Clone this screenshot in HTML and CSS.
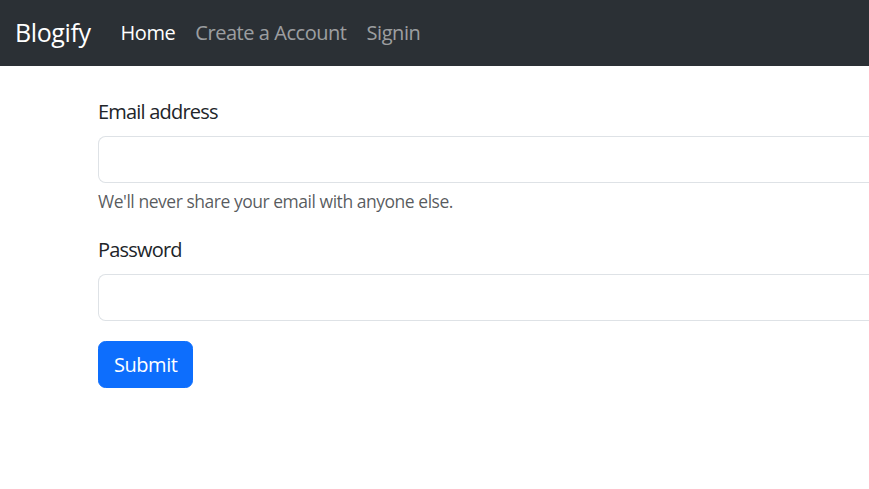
FILE: index.html
```html
<!DOCTYPE html>
<html lang="en">
<head>
<meta charset="utf-8">
<title>Blogify</title>
<link rel="stylesheet" href="styles.css">
</head>
<body>
<nav class="navbar">
  <a class="brand" href="#">Blogify</a>
  <ul class="nav">
    <li><a class="nav-link active" href="#">Home</a></li>
    <li><a class="nav-link" href="#">Create a Account</a></li>
    <li><a class="nav-link" href="#">Signin</a></li>
  </ul>
</nav>
<main class="container">
  <form class="form">
    <div class="group">
      <label class="label" for="email">Email address</label>
      <input class="control" type="email" id="email">
      <div class="help">We'll never share your email with anyone else.</div>
    </div>
    <div class="group">
      <label class="label" for="password">Password</label>
      <input class="control" type="password" id="password">
    </div>
    <button class="btn" type="submit">Submit</button>
  </form>
</main>
</body>
</html>
```
FILE: styles.css
```css
html, body {
  margin: 0;
  padding: 0;
  overflow: hidden;
}
body {
  font-family: "Open Sans", "Noto Sans", sans-serif;
  font-size: 20px;
  line-height: 1.5;
  color: #212529;
  background: #fff;
  letter-spacing: -0.45px;
}
.navbar {
  height: 66px;
  background: #2b3035;
  display: flex;
  align-items: center;
  padding: 0 15px;
  box-sizing: border-box;
}
.brand {
  font-size: 25px;
  line-height: 37.5px;
  color: #fff;
  text-decoration: none;
  margin-right: 20px;
  letter-spacing: -0.4px;
}
.nav {
  display: flex;
  list-style: none;
  margin: 0;
  padding: 0;
}
.nav-link {
  display: block;
  padding: 10px 10px;
  line-height: 30px;
  color: rgba(255, 255, 255, 0.55);
  text-decoration: none;
}
.nav-link.active {
  color: #fff;
}
.container {
  padding: 29.5px 0 0 98px;
}
.form {
  width: 780px;
}
.group {
  margin-bottom: 20px;
}
.label {
  display: block;
  padding-top: 1px;
  margin-bottom: 9px;
  line-height: 30px;
  letter-spacing: -0.8px;
}
.control {
  display: block;
  width: 100%;
  box-sizing: border-box;
  height: 47px;
  padding: 7.5px 15px;
  font: inherit;
  border: 1px solid #dee2e6;
  border-radius: 7.5px 0 0 7.5px;
  border-right: 0;
  background: #fff;
  outline: none;
}
.help {
  margin-top: 5px;
  font-size: 17.5px;
  line-height: 26.25px;
  color: rgba(33, 37, 41, 0.75);
  letter-spacing: -0.47px;
}
.btn {
  display: inline-block;
  height: 47px;
  padding: 2px 15px 0;
  font: inherit;
  letter-spacing: -0.45px;
  color: #fff;
  background: #0d6efd;
  border: 1px solid #0d6efd;
  border-radius: 7.5px;
  cursor: pointer;
}
```
